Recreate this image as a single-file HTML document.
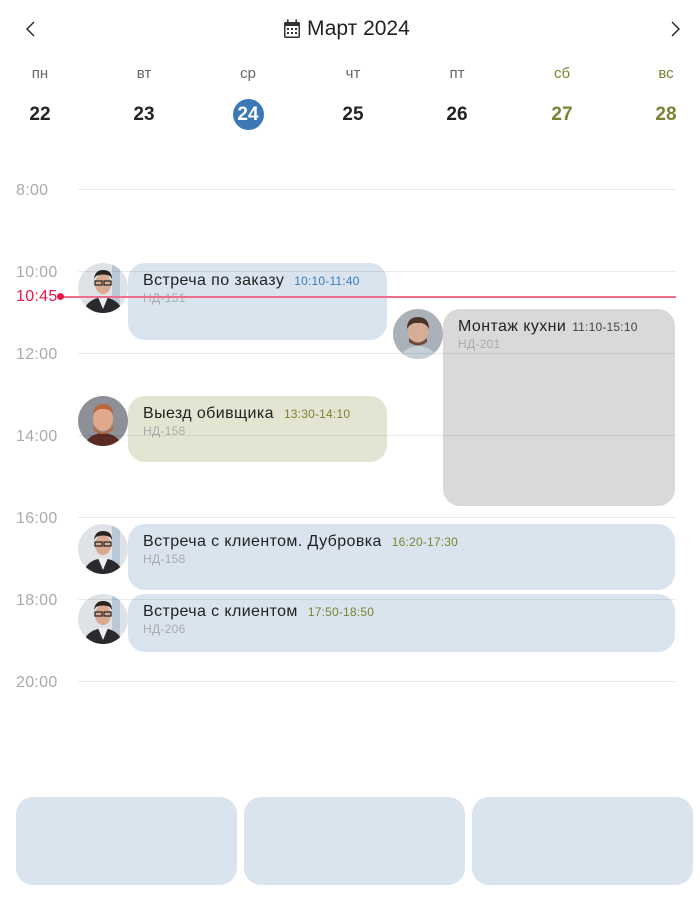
<!DOCTYPE html>
<html><head><meta charset="utf-8"><style>
*{margin:0;padding:0;box-sizing:border-box}
body{width:700px;height:906px;background:#fff;font-family:"Liberation Sans",sans-serif;position:relative;overflow:hidden;color:#222}
.a{position:absolute}
.dn{position:absolute;top:65px;width:40px;margin-left:-20px;text-align:center;font-size:15px;color:#666}
.dd{position:absolute;top:104px;width:40px;margin-left:-20px;text-align:center;font-size:19px;font-weight:bold;color:#222;line-height:22px}
.we{color:#7b8231}
.hl{position:absolute;left:78px;width:598px;height:1px;background:rgba(0,0,0,0.08);z-index:5}
.ht{position:absolute;left:16px;font-size:16px;color:#aaa;line-height:18px;letter-spacing:0.3px}
.ev{position:absolute;border-radius:17px;padding:9px 15px}
.ev .t{font-size:16px;color:#222;white-space:nowrap;letter-spacing:0.4px}
.ev .t span{font-size:12px;margin-left:10px;letter-spacing:0.2px}
.ev .s{font-size:12px;color:#aaa;margin-top:1px;letter-spacing:0.3px}
.av{position:absolute;width:50px;height:50px;border-radius:50%;overflow:hidden;z-index:3}
.card{position:absolute;top:797px;height:88px;width:221px;background:#d9e4ef;border-radius:17px}
</style></head><body>
<svg class="a" style="left:23px;top:20px" width="14" height="18" viewBox="0 0 14 18"><path d="M11 2 L4 9 L11 16" fill="none" stroke="#222" stroke-width="1.4"/></svg>
<svg class="a" style="left:669px;top:20px" width="14" height="18" viewBox="0 0 14 18"><path d="M3 2 L10 9 L3 16" fill="none" stroke="#222" stroke-width="1.4"/></svg>
<svg class="a" style="left:283px;top:19px" width="18" height="20" viewBox="0 0 18 20"><rect x="1" y="3" width="16" height="16" rx="1.5" fill="#333"/><rect x="2.5" y="7" width="13" height="10.5" fill="#fff"/><rect x="4" y="0.5" width="1.6" height="4" fill="#333"/><rect x="12.4" y="0.5" width="1.6" height="4" fill="#333"/><g fill="#333"><rect x="4" y="9" width="2" height="2"/><rect x="8" y="9" width="2" height="2"/><rect x="12" y="9" width="2" height="2"/><rect x="4" y="13" width="2" height="2"/><rect x="8" y="13" width="2" height="2"/><rect x="12" y="13" width="2" height="2"/></g></svg>
<div class="a" style="left:307px;top:17px;font-size:21px;color:#222">Март 2024</div>

<div class="dn" style="left:40px">пн</div><div class="dn" style="left:144px">вт</div><div class="dn" style="left:248px">ср</div><div class="dn" style="left:353px">чт</div><div class="dn" style="left:457px">пт</div><div class="dn we" style="left:562px">сб</div><div class="dn we" style="left:666px">вс</div>
<div class="a" style="left:233px;top:99px;width:31px;height:31px;border-radius:50%;background:#3c78b4"></div>
<div class="dd" style="left:40px">22</div><div class="dd" style="left:144px">23</div><div class="dd" style="left:248px;color:#fff">24</div><div class="dd" style="left:353px">25</div><div class="dd" style="left:457px">26</div><div class="dd we" style="left:562px">27</div><div class="dd we" style="left:666px">28</div>

<div class="hl" style="top:189px"></div><div class="hl" style="top:271px"></div><div class="hl" style="top:353px"></div><div class="hl" style="top:435px"></div><div class="hl" style="top:517px"></div><div class="hl" style="top:599px"></div><div class="hl" style="top:681px"></div>
<div class="ht" style="top:182px">8:00</div><div class="ht" style="top:264px">10:00</div><div class="ht" style="top:346px">12:00</div><div class="ht" style="top:428px">14:00</div><div class="ht" style="top:510px">16:00</div><div class="ht" style="top:592px">18:00</div><div class="ht" style="top:674px">20:00</div>

<div class="ev" style="left:128px;top:263px;width:259px;height:77px;background:#d9e4ef"><div class="t">Встреча по заказу<span style="color:#3b7bbf">10:10-11:40</span></div><div class="s">НД-151</div></div>
<div class="ev" style="left:443px;top:309px;width:232px;height:197px;background:#d9d9d9"><div class="t">Монтаж кухни<span style="color:#444;margin-left:6px">11:10-15:10</span></div><div class="s">НД-201</div></div>
<div class="ev" style="left:128px;top:396px;width:259px;height:66px;background:#e4e4d3"><div class="t">Выезд обивщика<span style="color:#7b8231">13:30-14:10</span></div><div class="s">НД-158</div></div>
<div class="ev" style="left:128px;top:524px;width:547px;height:66px;background:#d9e4ef"><div class="t">Встреча с клиентом. Дубровка<span style="color:#7b8231">16:20-17:30</span></div><div class="s">НД-158</div></div>
<div class="ev" style="left:128px;top:594px;width:547px;height:58px;background:#d9e4ef"><div class="t">Встреча с клиентом<span style="color:#7b8231">17:50-18:50</span></div><div class="s">НД-206</div></div>

<svg width="0" height="0" style="position:absolute"><defs>
<symbol id="p1" viewBox="0 0 50 50"><rect width="50" height="50" fill="#dfe3e8"/><rect x="34" y="0" width="8" height="50" fill="#b9c8d6"/><path d="M5 50 Q8 36 25 34 Q42 36 45 50Z" fill="#2a2a2e"/><path d="M20 34 L25 46 L30 34Z" fill="#eee"/><ellipse cx="25" cy="21" rx="8" ry="10" fill="#d9aa90"/><path d="M16 16 Q17 7 25 7 Q34 7 34 16 L32 13 Q25 10 18 13Z" fill="#2b2320"/><rect x="17" y="18" width="7" height="4" fill="none" stroke="#222" stroke-width="1.2"/><rect x="26" y="18" width="7" height="4" fill="none" stroke="#222" stroke-width="1.2"/></symbol>
<symbol id="p2" viewBox="0 0 50 50"><rect width="50" height="50" fill="#8d9096"/><path d="M6 50 Q10 38 25 37 Q40 38 44 50Z" fill="#5a2a24"/><ellipse cx="25" cy="23" rx="10" ry="12" fill="#e0a98c"/><path d="M15 30 Q25 42 35 30 L35 34 Q25 42 15 34Z" fill="#b56b44"/><path d="M15 18 Q16 8 25 8 Q35 8 35 18 Q30 12 25 13 Q20 12 15 18Z" fill="#b8673e"/></symbol>
<symbol id="p3" viewBox="0 0 50 50"><rect width="50" height="50" fill="#aab1b9"/><path d="M6 50 Q10 38 25 37 Q40 38 44 50Z" fill="#c7d0d6"/><ellipse cx="25" cy="23" rx="10" ry="12" fill="#d8ad97"/><path d="M16 29 Q25 38 34 29 L34 33 Q25 40 16 33Z" fill="#6b4b3b"/><path d="M14 20 Q14 8 25 8 Q36 8 36 20 Q32 13 25 14 Q18 13 14 20Z" fill="#4a3327"/></symbol>
</defs></svg>
<svg class="av" style="left:78px;top:263px" viewBox="0 0 50 50"><use href="#p1"/></svg>
<svg class="av" style="left:393px;top:309px" viewBox="0 0 50 50"><use href="#p3"/></svg>
<svg class="av" style="left:78px;top:396px" viewBox="0 0 50 50"><use href="#p2"/></svg>
<svg class="av" style="left:78px;top:524px" viewBox="0 0 50 50"><use href="#p1"/></svg>
<svg class="av" style="left:78px;top:594px" viewBox="0 0 50 50"><use href="#p1"/></svg>

<div class="a" style="left:60px;top:296px;width:616px;height:1.5px;background:#ee6d8b;z-index:6"></div>
<div class="a" style="left:57px;top:293px;width:7px;height:7px;border-radius:50%;background:#e8194a;z-index:6"></div>
<div class="a" style="left:16px;top:288px;font-size:16px;color:#e8194a;line-height:18px;z-index:6;letter-spacing:0.3px">10:45</div>

<div class="card" style="left:16px"></div><div class="card" style="left:244px"></div><div class="card" style="left:472px"></div>
</body></html>
